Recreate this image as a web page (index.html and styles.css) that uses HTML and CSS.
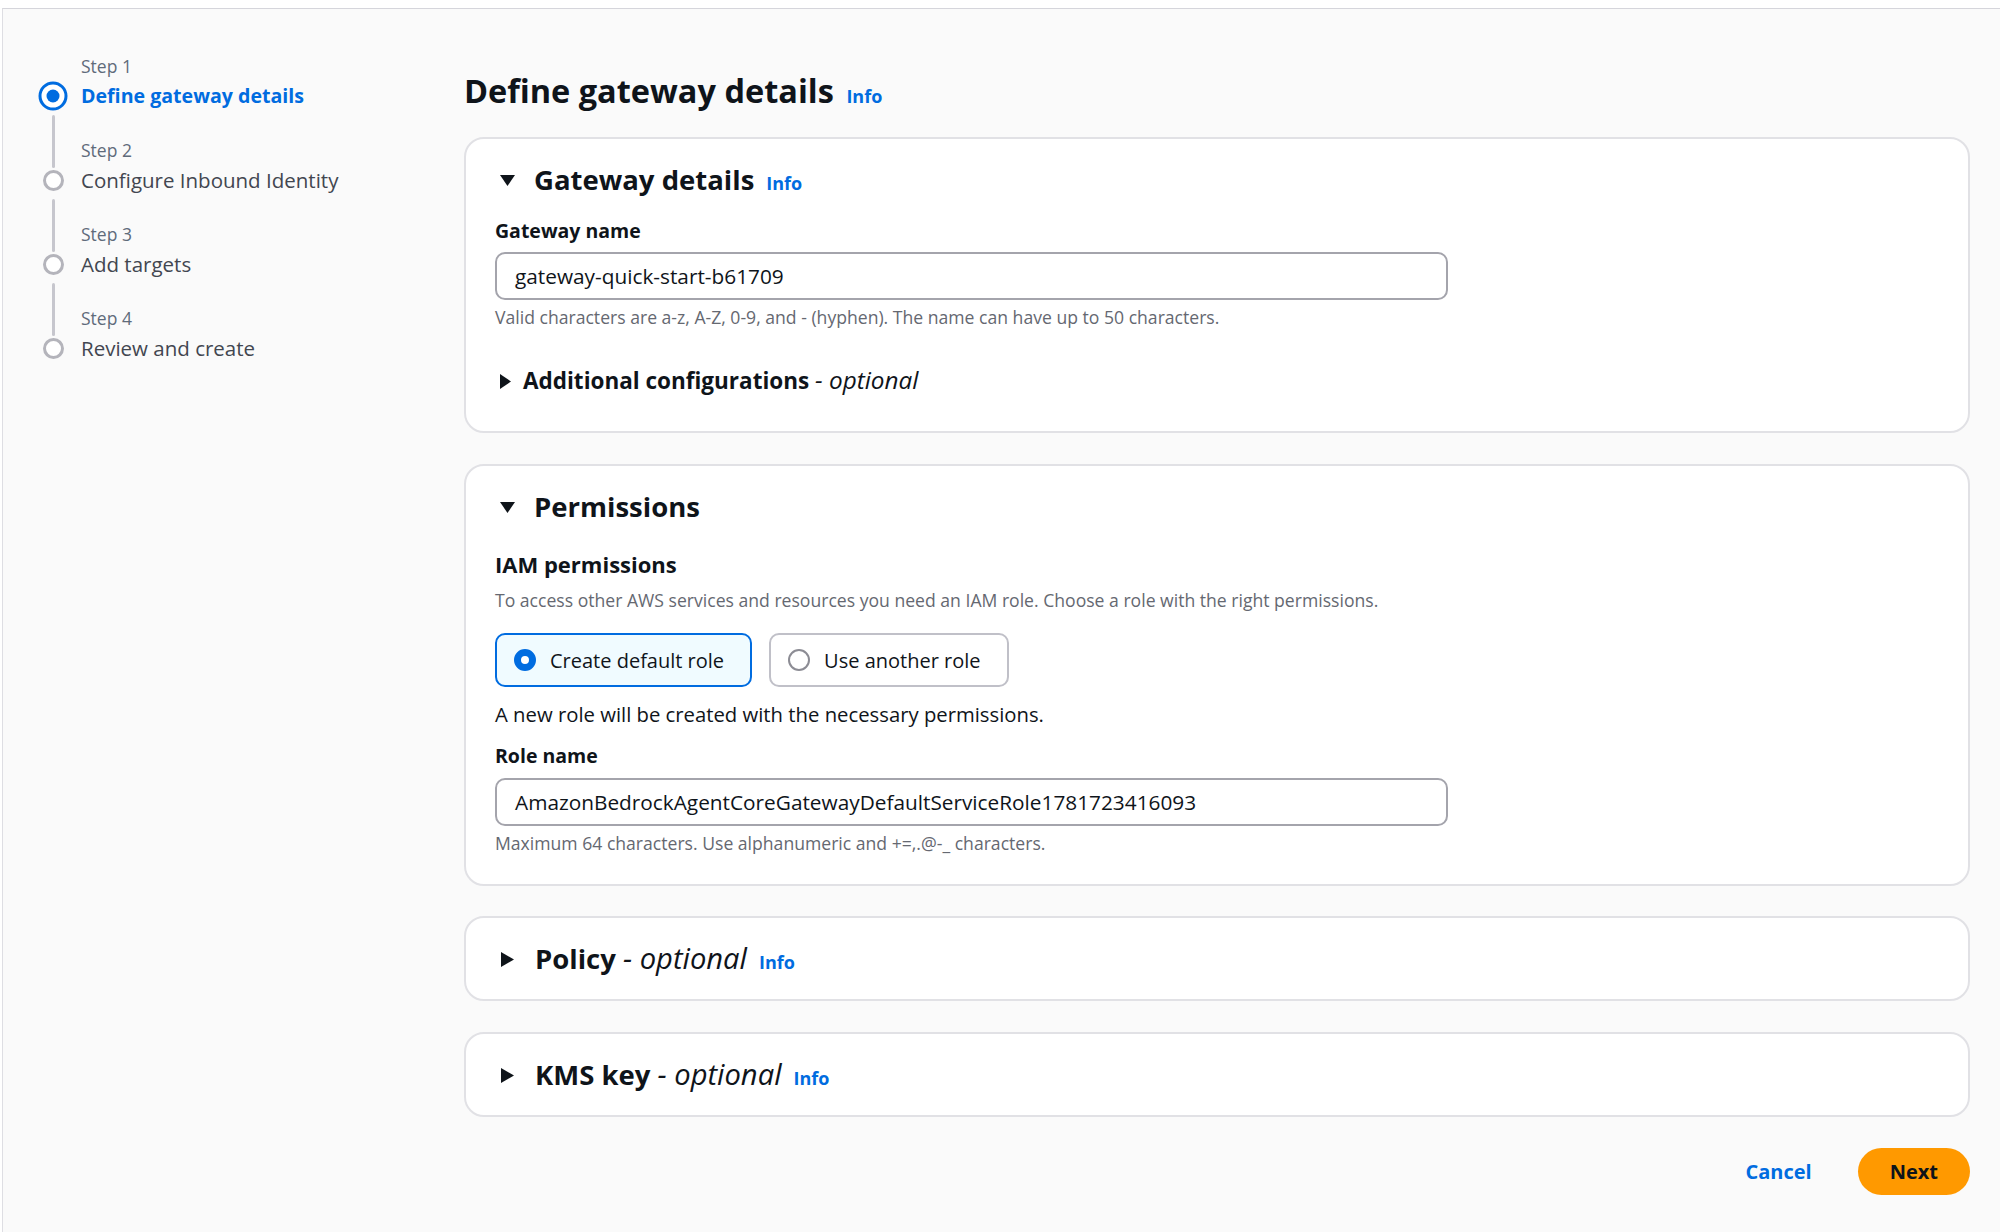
FILE: index.html
```html
<!DOCTYPE html>
<html lang="en">
<head>
    <meta charset="UTF-8">
    <meta name="viewport" content="width=device-width, initial-scale=1.0">
    <title>Create gateway</title>
    <link rel="stylesheet" href="styles.css">
</head>
<body>
<div class="frame">
    <nav class="steps">
        <ol>
            <li class="step active">
                <span class="step-label">Step 1</span>
                <span class="step-dot">
                    <svg width="30" height="30" viewBox="0 0 30 30"><circle cx="15" cy="15" r="13" fill="#fff" stroke="#006ce0" stroke-width="3"/><circle cx="15" cy="15" r="6.5" fill="#006ce0"/></svg>
                </span>
                <span class="step-title">Define gateway details</span>
            </li>
            <li class="step">
                <span class="step-line"></span>
                <span class="step-label">Step 2</span>
                <span class="step-dot"><span class="dot"></span></span>
                <span class="step-title">Configure Inbound Identity</span>
            </li>
            <li class="step">
                <span class="step-line"></span>
                <span class="step-label">Step 3</span>
                <span class="step-dot"><span class="dot"></span></span>
                <span class="step-title">Add targets</span>
            </li>
            <li class="step">
                <span class="step-line"></span>
                <span class="step-label">Step 4</span>
                <span class="step-dot"><span class="dot"></span></span>
                <span class="step-title">Review and create</span>
            </li>
        </ol>
    </nav>

    <main class="content">
        <h1>Define gateway details <a class="info" href="#">Info</a></h1>

        <section class="panel details">
            <h2 class="panel-header">
                <svg class="caret-down" width="15" height="11" viewBox="0 0 15 11"><path d="M0 0H15L7.5 11Z" fill="#0f141a"/></svg>
                <span>Gateway details</span>
                <a class="info" href="#">Info</a>
            </h2>
            <label class="field-label first">Gateway name</label>
            <div class="input">gateway-quick-start-b61709</div>
            <p class="hint">Valid characters are a-z, A-Z, 0-9, and - (hyphen). The name can have up to 50 characters.</p>
            <div class="expander">
                <svg class="caret-small" width="11" height="15" viewBox="0 0 11 15"><path d="M0 0V15L11 7.5Z" fill="#0f141a"/></svg>
                <span>Additional configurations <em>- optional</em></span>
            </div>
        </section>

        <section class="panel permissions">
            <h2 class="panel-header">
                <svg class="caret-down" width="15" height="11" viewBox="0 0 15 11"><path d="M0 0H15L7.5 11Z" fill="#0f141a"/></svg>
                <span>Permissions</span>
            </h2>
            <h3>IAM permissions</h3>
            <p class="hint desc">To access other AWS services and resources you need an IAM role. Choose a role with the right permissions.</p>
            <div class="tiles">
                <label class="tile selected"><span class="radio checked"></span>Create default role</label>
                <label class="tile"><span class="radio"></span>Use another role</label>
            </div>
            <p class="note">A new role will be created with the necessary permissions.</p>
            <label class="field-label">Role name</label>
            <div class="input tall">AmazonBedrockAgentCoreGatewayDefaultServiceRole1781723416093</div>
            <p class="hint">Maximum 64 characters. Use alphanumeric and +=,.@-_ characters.</p>
        </section>

        <section class="panel collapsed">
            <h2 class="panel-header">
                <svg class="caret-right" width="13" height="15" viewBox="0 0 13 15"><path d="M0 0V15L13 7.5Z" fill="#0f141a"/></svg>
                <span>Policy <em>- optional</em></span>
                <a class="info" href="#">Info</a>
            </h2>
        </section>

        <section class="panel collapsed">
            <h2 class="panel-header">
                <svg class="caret-right" width="13" height="15" viewBox="0 0 13 15"><path d="M0 0V15L13 7.5Z" fill="#0f141a"/></svg>
                <span>KMS key <em>- optional</em></span>
                <a class="info" href="#">Info</a>
            </h2>
        </section>

        <div class="actions">
            <button class="btn-link">Cancel</button>
            <button class="btn-primary">Next</button>
        </div>
    </main>
</div>
</body>
</html>
```

FILE: styles.css
```css
* {
    box-sizing: border-box;
}
body {
    margin: 0;
    background: #fff;
    font-family: "Open Sans", "Noto Sans", sans-serif;
    color: #0f141a;
}
.frame {
    margin: 8px 0 0 2px;
    min-height: calc(100vh - 8px);
    border-top: 1px solid #d5d5db;
    border-left: 1px solid #dedee3;
    background: #fafafa;
    display: grid;
    grid-template-columns: 461px 1fr;
    padding-right: 30px;
}

/* wizard steps */
.steps ol {
    list-style: none;
    margin: 0;
    padding: 20px 0 0 35px;
}
.step {
    display: grid;
    grid-template-columns: 30px 1fr;
    grid-template-areas: "line label" "dot title";
    column-gap: 13px;
}
.step-line {
    grid-area: line;
    justify-self: center;
    width: 3px;
    margin: 2px 0 -5px;
    background: #c6c6cd;
    border-radius: 2px;
}
.step-label {
    grid-area: label;
    padding-top: 24px;
    font-size: 17.5px;
    line-height: 26px;
    color: #5f6b7a;
}
.step-dot {
    grid-area: dot;
    display: flex;
    align-items: center;
    justify-content: center;
}
.step-dot svg {
    display: block;
}
.dot {
    width: 21px;
    height: 21px;
    border: 3px solid #b4b4bb;
    border-radius: 50%;
    background: #fff;
}
.step-title {
    grid-area: title;
    font-size: 20.5px;
    line-height: 34px;
    color: #424650;
}
.step.active .step-title {
    color: #006ce0;
    font-weight: 700;
    font-size: 19.6px;
}

/* main column */
.content {
    padding-top: 60px;
}
h1 {
    margin: 0 0 24px;
    font-size: 32.5px;
    line-height: 44px;
    font-weight: 700;
}
.info {
    margin-left: 4px;
    font-size: 18px;
    line-height: 1;
    font-weight: 700;
    color: #006ce0;
    text-decoration: none;
}
.panel {
    background: #fff;
    border: 2px solid #e1e1e5;
    border-radius: 20px;
    padding: 23px 29px 22px;
    margin-bottom: 31px;
}
.panel.details {
    padding-bottom: 35px;
}
.panel.permissions {
    padding-bottom: 30px;
    margin-bottom: 30px;
}
.panel-header {
    display: flex;
    align-items: baseline;
    margin: 0;
    font-size: 27.5px;
    line-height: 36px;
    font-weight: 700;
}
.panel-header svg {
    align-self: center;
    flex-shrink: 0;
}
.caret-down {
    margin: 0 19px 0 5px;
}
.caret-right {
    margin: 0 21px 0 6px;
}
.panel-header .info {
    margin-left: 12px;
}
em {
    font-style: italic;
    font-weight: 400;
    font-size: 1.06em;
    line-height: 1;
}
.field-label {
    display: block;
    margin-top: 17px;
    font-size: 19.5px;
    line-height: 24px;
    font-weight: 700;
}
.field-label.first {
    margin-top: 21px;
}
.input {
    margin-top: 9px;
    max-width: 953px;
    height: 48px;
    padding: 0 18px;
    display: flex;
    align-items: center;
    border: 2px solid #a4a4ac;
    border-radius: 10px;
    background: #fff;
    font-size: 20.8px;
}
.input.tall {
    margin-top: 10px;
}
.hint {
    margin: 6px 0 0;
    font-size: 17.6px;
    line-height: 22px;
    color: #656871;
}
.expander {
    display: flex;
    align-items: center;
    margin-top: 38px;
    font-size: 22.5px;
    line-height: 30px;
    font-weight: 700;
}
.expander em {
    font-size: 1.08em;
}
.caret-small {
    margin: 0 12px 0 5px;
}
h3 {
    margin: 25px 0 0;
    font-size: 22px;
    line-height: 28px;
    font-weight: 700;
}
.hint.desc {
    margin-top: 11px;
}
.tiles {
    display: flex;
    gap: 17px;
    margin-top: 22px;
}
.tile {
    display: flex;
    align-items: center;
    gap: 14px;
    height: 54px;
    padding: 0 26px 0 17px;
    border: 2px solid #c0c0c8;
    border-radius: 10px;
    background: #fff;
    font-size: 20px;
}
.tile.selected {
    border-color: #006ce0;
    background: #f0fbff;
}
.radio {
    width: 22px;
    height: 22px;
    border: 2px solid #8c8c94;
    border-radius: 50%;
    background: #fff;
}
.radio.checked {
    border: 7px solid #006ce0;
}
.note {
    margin: 14px 0 0;
    font-size: 20.3px;
    line-height: 26px;
}

/* footer buttons */
.actions {
    display: flex;
    justify-content: flex-end;
    align-items: center;
    gap: 26px;
}
.actions button {
    font-family: inherit;
    font-size: 20px;
    font-weight: 700;
    border: none;
    cursor: pointer;
}
.btn-link {
    background: none;
    color: #006ce0;
    padding: 0 20px;
}
.btn-primary {
    height: 47px;
    padding: 0 32px;
    border-radius: 24px;
    background: #ff9900;
    color: #0f141a;
}
```
